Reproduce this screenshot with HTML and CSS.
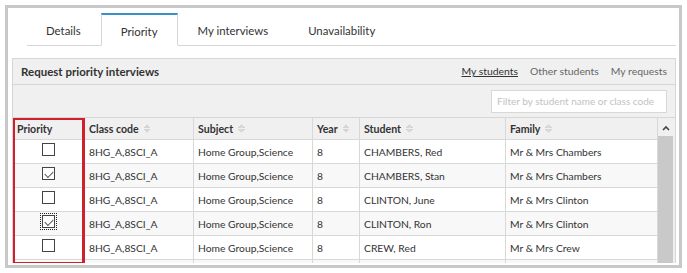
FILE: index.html
```html
<!DOCTYPE html>
<html lang="en">
<head>
  <meta charset="UTF-8" />
  <title>Request priority interviews</title>
  <link rel="stylesheet" href="styles.css">
</head>
<body>
  <div class="frame">
    <ul class="tabs">
      <li class="tab">Details</li>
      <li class="tab active">Priority</li>
      <li class="tab">My interviews</li>
      <li class="tab">Unavailability</li>
    </ul>

    <div class="panel">
      <div class="panel-head">
        <span class="panel-title">Request priority interviews</span>
        <nav class="views">
          <a class="current">My students</a>
          <a>Other students</a>
          <a>My requests</a>
        </nav>
      </div>
      <div class="filter-bar">
        <div class="filter">Filter by student name or class code</div>
      </div>

      <div class="table-wrap">
        <div class="grid">
          <div class="th">Priority</div>
          <div class="th sort">Class code</div>
          <div class="th sort">Subject</div>
          <div class="th sort">Year</div>
          <div class="th sort">Student</div>
          <div class="th sort">Family</div>

          <div class="td check"><span class="box"></span></div>
          <div class="td">8HG_A,8SCI_A</div>
          <div class="td">Home Group,Science</div>
          <div class="td">8</div>
          <div class="td">CHAMBERS, Red</div>
          <div class="td">Mr &amp; Mrs Chambers</div>

          <div class="td check alt"><span class="box on"></span></div>
          <div class="td alt">8HG_A,8SCI_A</div>
          <div class="td alt">Home Group,Science</div>
          <div class="td alt">8</div>
          <div class="td alt">CHAMBERS, Stan</div>
          <div class="td alt">Mr &amp; Mrs Chambers</div>

          <div class="td check"><span class="box"></span></div>
          <div class="td">8HG_A,8SCI_A</div>
          <div class="td">Home Group,Science</div>
          <div class="td">8</div>
          <div class="td">CLINTON, June</div>
          <div class="td">Mr &amp; Mrs Clinton</div>

          <div class="td check alt"><span class="box on focus"></span></div>
          <div class="td alt">8HG_A,8SCI_A</div>
          <div class="td alt">Home Group,Science</div>
          <div class="td alt">8</div>
          <div class="td alt">CLINTON, Ron</div>
          <div class="td alt">Mr &amp; Mrs Clinton</div>

          <div class="td check"><span class="box"></span></div>
          <div class="td">8HG_A,8SCI_A</div>
          <div class="td">Home Group,Science</div>
          <div class="td">8</div>
          <div class="td">CREW, Red</div>
          <div class="td">Mr &amp; Mrs Crew</div>

          <!-- next row, scrolled out of view -->
          <div class="td alt"></div>
          <div class="td alt"></div>
          <div class="td alt"></div>
          <div class="td alt"></div>
          <div class="td alt"></div>
          <div class="td alt"></div>
        </div>

        <div class="scrollbar">
          <div class="scroll-up">
            <svg width="8" height="6" viewBox="0 0 8 6"><path d="M1 5 L4 2 L7 5" fill="none" stroke="#444" stroke-width="1.6"/></svg>
          </div>
          <div class="scroll-thumb"></div>
        </div>

        <div class="highlight"></div>
      </div>
    </div>
  </div>
</body>
</html>
```

FILE: styles.css
```css
* {
  box-sizing: border-box;
}

body {
  margin: 0;
  background: #fff;
  font-family: Lato, 'Open Sans', sans-serif;
  color: #333;
}

.frame {
  margin: 5px;
  width: 677px;
  height: 263px;
  border: 3px solid #c8c8c8;
  padding: 5px 3px 2px 4px;
  display: flex;
  flex-direction: column;
  overflow: hidden;
}

/* tabs */
.tabs {
  list-style: none;
  margin: 0 0 12px 15px;
  padding: 0;
  display: flex;
  border-bottom: 1px solid #d6d6d6;
  height: 33px;
}

.tab {
  padding: 0 19px;
  font-size: 11.4px;
  line-height: 31px;
  color: #333;
  border: 1px solid transparent;
  border-top-width: 2px;
  margin-bottom: -1px;
}

.tab:first-child {
  border-left: none;
}

.tab.active {
  background: #fff;
  border-color: #d6d6d6;
  border-top-color: #3a8fc8;
  border-bottom-color: #fff;
  line-height: 33px;
}

/* panel */
.panel {
  flex: 1;
  min-height: 0;
  border: 1px solid #d6d6d6;
  border-bottom: none;
  background: #f0f0f0;
  display: flex;
  flex-direction: column;
}

.panel-head {
  height: 26px;
  border-bottom: 1px solid #d6d6d6;
  display: flex;
  align-items: center;
  justify-content: space-between;
  padding: 0 8px 1px 8px;
}

.panel-title {
  font-size: 11.5px;
  font-weight: bold;
  color: #333;
}

.views {
  display: flex;
  gap: 12px;
  font-size: 10.4px;
}

.views a {
  color: #666;
}

.views a.current {
  color: #333;
  text-decoration: underline;
}

.filter-bar {
  height: 32px;
  display: flex;
  align-items: center;
  justify-content: flex-end;
  padding: 0 8px 0 0;
}

.filter {
  width: 176px;
  height: 23px;
  background: #fff;
  border: 1px solid #d8d8d8;
  font-size: 10px;
  color: #c2c2c2;
  line-height: 21px;
  padding-left: 5px;
  white-space: nowrap;
  overflow: hidden;
}

/* table */
.table-wrap {
  flex: 1;
  min-height: 0;
  display: flex;
  position: relative;
  overflow: hidden;
  border-top: 1px solid #d6d6d6;
  background: #fff;
  padding-right: 2px;
  background-clip: content-box;
}

.grid {
  display: grid;
  grid-template-columns: 72px 109px 119px 47px 146px 152px;
  grid-auto-rows: 24px;
  grid-template-rows: 22px;
  align-content: start;
}

.th,
.td {
  font-size: 10.3px;
  padding-left: 4px;
  display: flex;
  align-items: center;
  border-right: 1px solid #d8d8d8;
  border-bottom: 1px solid #d8d8d8;
  white-space: nowrap;
  background: #fff;
}

.th {
  background: #f0f0f0;
  font-weight: bold;
  color: #333;
  font-size: 10.6px;
}

.th.sort::after {
  content: "";
  width: 7px;
  height: 9px;
  margin-left: 5px;
  background:
    linear-gradient(to bottom right, transparent 50%, #d4d4d4 50%) 0 0 / 3.5px 4px no-repeat,
    linear-gradient(to bottom left, transparent 50%, #d4d4d4 50%) 3.5px 0 / 3.5px 4px no-repeat,
    linear-gradient(to top right, transparent 50%, #d4d4d4 50%) 0 5px / 3.5px 4px no-repeat,
    linear-gradient(to top left, transparent 50%, #d4d4d4 50%) 3.5px 5px / 3.5px 4px no-repeat;
}

.td.alt {
  background: #f8f8f8;
}

.td.check {
  justify-content: center;
  padding-left: 0;
}

.box {
  width: 13px;
  height: 13px;
  border: 1px solid #444;
  background: #fff;
  position: relative;
  margin-bottom: 4px;
}

.box.on::after {
  content: "";
  position: absolute;
  left: 2px;
  top: 1px;
  width: 7px;
  height: 4px;
  border-left: 1.3px solid #555;
  border-bottom: 1.3px solid #555;
  transform: translate(0, 2px) rotate(-45deg);
}

.box.focus {
  outline: 1px dotted #222;
  outline-offset: 1px;
}

.scrollbar {
  width: 16px;
  display: flex;
  flex-direction: column;
}

.scroll-up {
  height: 18px;
  background: #f0f0f0;
  display: flex;
  justify-content: center;
  align-items: center;
  padding-top: 1px;
}

.scroll-thumb {
  flex: 1;
  background: #c9c9c9;
}

.highlight {
  position: absolute;
  left: -1px;
  top: -1px;
  width: 73px;
  height: 148px;
  border: 3px solid #d0202b;
  pointer-events: none;
}
```
